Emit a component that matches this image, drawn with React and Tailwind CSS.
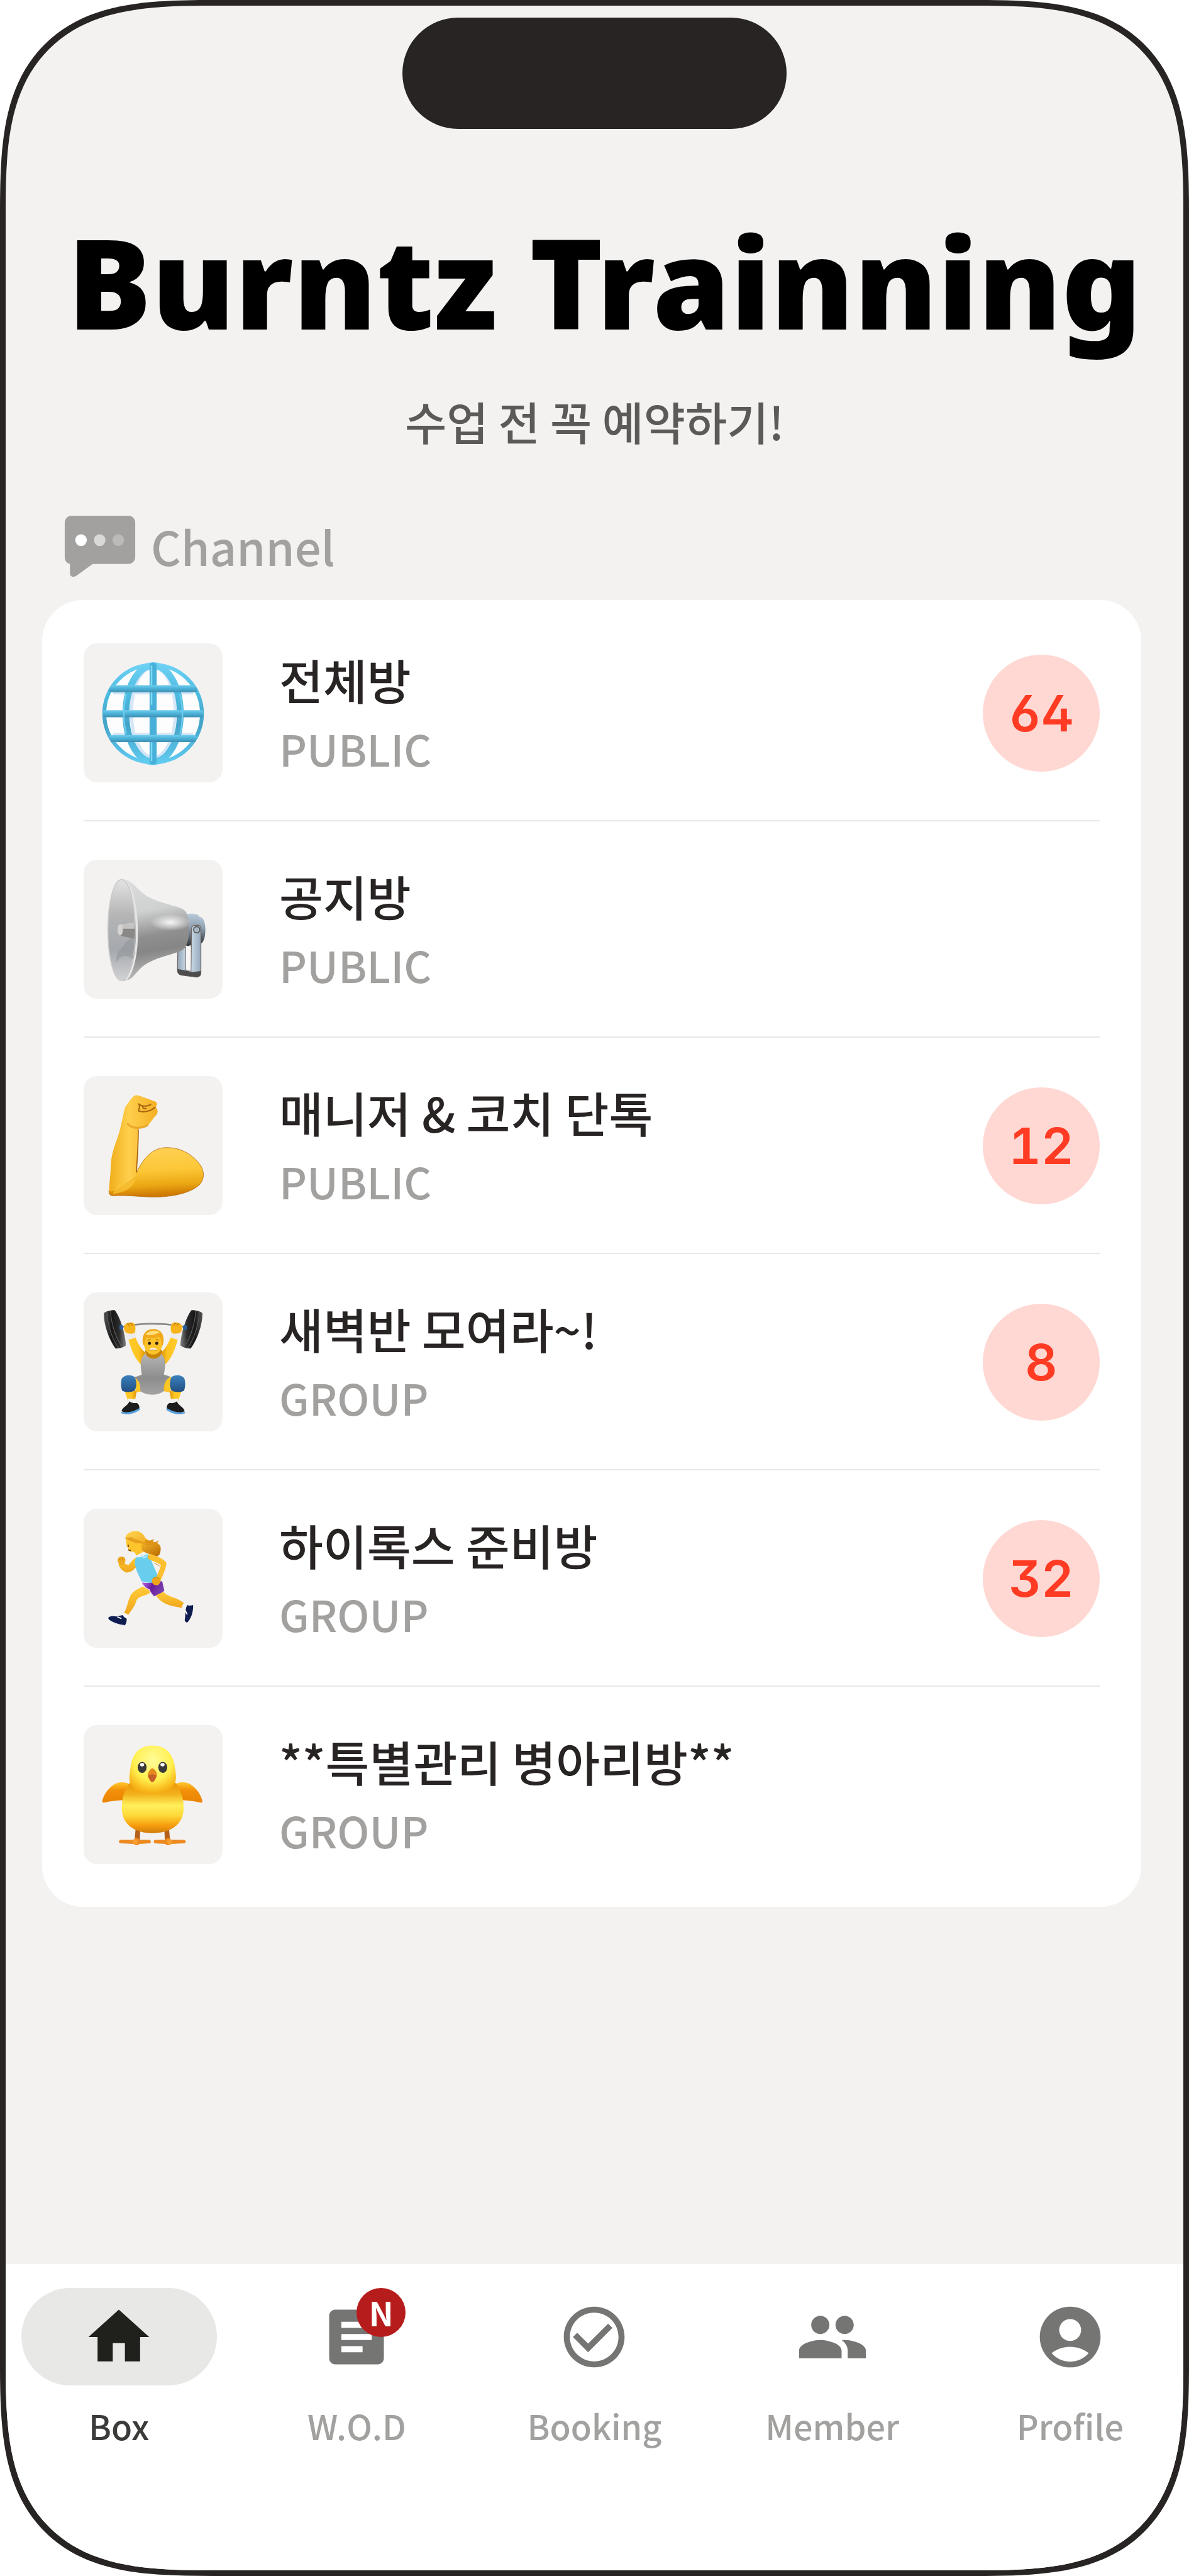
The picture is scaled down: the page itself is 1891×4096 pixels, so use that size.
import {
  MdArticle,
  MdCheckCircleOutline,
  MdGroup,
  MdHome,
} from "react-icons/md";

function GlobeEmoji() {
  return (
    <svg viewBox="187 181 532 532" className="w-full" aria-hidden="true">
      <defs>
        <linearGradient id="globeLine" gradientUnits="userSpaceOnUse" x1="0" y1="258" x2="0" y2="645">
          <stop offset="0" stopColor="#6fd2f5" />
          <stop offset="0.3" stopColor="#4dbbe0" />
          <stop offset="0.6" stopColor="#43a3c8" />
          <stop offset="1" stopColor="#62cdf2" />
        </linearGradient>
        <linearGradient id="globeBar" x1="0" y1="0" x2="0" y2="1">
          <stop offset="0" stopColor="#6fcdee" />
          <stop offset="0.5" stopColor="#49b0d6" />
          <stop offset="1" stopColor="#3f8fb2" />
        </linearGradient>
        <clipPath id="globeClip">
          <circle cx="453" cy="450" r="194" />
        </clipPath>
      </defs>
      <circle cx="453" cy="450" r="188" fill="#fdfdfd" />
      <g fill="none" stroke="#d3e6f7" strokeWidth="12">
        <ellipse cx="454" cy="445" rx="84" ry="172" />
        <path d="M300 372h306M300 528h306" strokeWidth="9" />
      </g>
      <g fill="none" stroke="url(#globeLine)">
        <circle cx="453" cy="450" r="187" strokeWidth="15" />
        <ellipse cx="453" cy="450" rx="104" ry="184" strokeWidth="26" />
      </g>
      <path
        d="M453 268v364"
        stroke="#48b0d8"
        strokeWidth="27"
        strokeLinecap="round"
      />
      <path d="M447 266v150M447 560v72" stroke="#7bd9fa" strokeWidth="6" />
      <g fill="url(#globeBar)" clipPath="url(#globeClip)">
        <rect x="282" y="341" width="342" height="27" rx="13" />
        <rect x="258" y="437" width="390" height="27" rx="13" />
        <rect x="282" y="532" width="342" height="27" rx="13" />
      </g>
      <path
        d="M350 375c-12 50-12 105 0 152M556 375c12 50 12 105 0 152"
        fill="none"
        stroke="#6acdf0"
        strokeWidth="6"
      />
    </svg>
  );
}

function MegaphoneEmoji() {
  return (
    <svg viewBox="187 1010 532 532" className="w-full" aria-hidden="true">
      <defs>
        <linearGradient id="hornBody" x1="0" y1="0" x2="0.12" y2="1">
          <stop offset="0" stopColor="#dcdddd" />
          <stop offset="0.35" stopColor="#cfd0d0" />
          <stop offset="0.6" stopColor="#8f8f8f" />
          <stop offset="0.75" stopColor="#868686" />
          <stop offset="1" stopColor="#bdbdbd" />
        </linearGradient>
        <linearGradient id="hornInner" x1="0" y1="0" x2="0" y2="1">
          <stop offset="0" stopColor="#e3e3e3" />
          <stop offset="0.35" stopColor="#b5b5b5" />
          <stop offset="0.7" stopColor="#a5a8ad" />
          <stop offset="1" stopColor="#d2d3d4" />
        </linearGradient>
        <linearGradient id="hornSteel" x1="0" y1="0" x2="1" y2="0">
          <stop offset="0" stopColor="#8fa3b5" />
          <stop offset="0.45" stopColor="#d8e6f1" />
          <stop offset="1" stopColor="#94a9bb" />
        </linearGradient>
        <linearGradient id="hornCap" x1="0" y1="0" x2="0" y2="1">
          <stop offset="0" stopColor="#b9cadb" />
          <stop offset="0.45" stopColor="#8a9bab" />
          <stop offset="1" stopColor="#2d3034" />
        </linearGradient>
        <radialGradient id="hornShine">
          <stop offset="0" stopColor="#fff" stopOpacity="0.9" />
          <stop offset="1" stopColor="#fff" stopOpacity="0" />
        </radialGradient>
      </defs>
      <path d="M620 1228c24-6 33 18 33 50s-8 54-24 56z" fill="url(#hornCap)" />
      <path d="M575 1220c20-6 45-4 53 4 12 30 10 86-4 114-12 6-32 6-46 0z" fill="url(#hornCap)" />
      <path
        d="M548 1345h30v85l20 6 2-161c0-9 5-14 14-14h10c8 0 12 4 12 12v170c0 11-7 16-17 16l-56-7c-12-2-17-8-17-20z"
        fill="url(#hornSteel)"
        stroke="#6f6561"
        strokeWidth="3"
      />
      <path d="M546 1428l34 6 24 6 31-4v8c0 10-6 15-16 15l-56-7c-12-2-17-8-17-24z" fill="#4e4d4d" />
      <path d="M579 1346l18-10v100l-18-6z" fill="#f8f7f6" />
      <circle cx="620" cy="1278" r="12" fill="#a8b8c6" stroke="#555" strokeWidth="4" />
      <path
        d="M335 1084c45 6 55 42 96 66 45 26 98 32 134 48 24 11 26 52 25 88-1 40-12 67-35 75-40 16-98 24-140 56-32 24-36 57-80 57z"
        fill="url(#hornBody)"
      />
      <ellipse cx="520" cy="1250" rx="80" ry="32" fill="url(#hornShine)" />
      <path
        d="M340 1086c60 40 72 320 8 384"
        fill="none"
        stroke="#e6e6e6"
        strokeWidth="8"
      />
      <ellipse cx="332" cy="1279" rx="52" ry="193" fill="url(#hornInner)" stroke="#c9c9c9" strokeWidth="4" />
      <path d="M383 1300c0 40-4 70-10 92-18-24-46-16-60 10-6-40 24-50 34-76z" fill="#8e9196" opacity="0.5" />
      <path d="M330 1256l52-6c3 20 3 40 0 62l-52-10c-16-8-16-40 0-46z" fill="#8b8886" />
      <path d="M330 1256l52-6v24h-60c0-10 2-16 8-18z" fill="#c6c4c2" />
      <ellipse cx="327" cy="1278" rx="10" ry="22" fill="#d5d4d2" />
    </svg>
  );
}

function BicepsEmoji() {
  return (
    <svg viewBox="187 181 532 532" className="w-full" aria-hidden="true">
      <defs>
        <linearGradient id="armUpper" x1="0" y1="0" x2="0.1" y2="1">
          <stop offset="0" stopColor="#ffd257" />
          <stop offset="0.5" stopColor="#fcc737" />
          <stop offset="0.8" stopColor="#eba714" />
          <stop offset="1" stopColor="#cf7a04" />
        </linearGradient>
        <linearGradient id="armFore" x1="0" y1="0" x2="1" y2="0">
          <stop offset="0" stopColor="#f0ad1b" />
          <stop offset="0.4" stopColor="#ffcf4c" />
          <stop offset="1" stopColor="#f3b024" />
        </linearGradient>
      </defs>
      <path
        d="M389 552c20-45 55-95 110-97 62-3 110 30 137 70 16 28 12 58-12 78-42 32-115 42-176 41-60-2-95-8-150-5-10 0-15-8-14-20z"
        fill="url(#armUpper)"
        stroke="#b96a08"
        strokeWidth="2"
      />
      <path
        d="M345 303c8-15 22-35 33-44 6-6 14-5 22-3l60 22c10 4 9 14 3 22 10 10 9 22 1 32-8 6-16 22-30 36-12 10-26 14-38 14 1 55-4 120-7 170-2 20-20 28-36 36-25 12-50 40-66 34-6-6 3-50 4-100 2-50 22-90 32-125 12-45 14-65 22-94z"
        fill="url(#armFore)"
      />
      <path
        d="M396 384c1 50-4 120-7 166"
        fill="none"
        stroke="#a85f0a"
        strokeWidth="4"
      />
      <path
        d="M298 632c30-5 70-8 92-60-30 20-50 18-72 24z"
        fill="#fbc63a"
        opacity="0.7"
      />
      <path
        d="M398 288c12 10 30 10 46 2M398 288c8 12-2 20 0 27 20 5 46 2 62-14M412 296c2 10 8 12 14 8"
        fill="none"
        stroke="#a9640d"
        strokeWidth="5"
        strokeLinecap="round"
      />
      <path
        d="M356 364c14 18 50 20 76 6"
        fill="none"
        stroke="#d98c0e"
        strokeWidth="8"
        strokeLinecap="round"
        opacity="0.5"
      />
    </svg>
  );
}

function LifterEmoji() {
  return (
    <svg viewBox="187 1010 532 532" className="w-full" aria-hidden="true">
      <defs>
        <linearGradient id="plateLeft" x1="0" y1="0" x2="1" y2="0">
          <stop offset="0" stopColor="#555" />
          <stop offset="0.35" stopColor="#161616" />
          <stop offset="0.7" stopColor="#2c2c2c" />
          <stop offset="1" stopColor="#858585" />
        </linearGradient>
        <linearGradient id="lifterSkin" x1="0" y1="0" x2="1" y2="0">
          <stop offset="0" stopColor="#ffca28" />
          <stop offset="0.6" stopColor="#fdc524" />
          <stop offset="1" stopColor="#dd9206" />
        </linearGradient>
        <linearGradient id="lifterSuit" x1="0" y1="0" x2="0" y2="1">
          <stop offset="0" stopColor="#b5b5b5" />
          <stop offset="0.6" stopColor="#8d8d8d" />
          <stop offset="1" stopColor="#a3a3a3" />
        </linearGradient>
        <linearGradient id="lifterPad" x1="0" y1="0" x2="0" y2="1">
          <stop offset="0" stopColor="#3b80bd" />
          <stop offset="1" stopColor="#1f4f82" />
        </linearGradient>
        <g id="lifterSide">
          <path d="M264 1090c8-8 25-12 42-12 20 25 40 85 43 135-10 8-24 12-40 12-25-35-45-90-45-135z" fill="url(#plateLeft)" />
          <path d="M276 1084c2 50 20 105 46 140M290 1080c2 50 20 105 46 140" fill="none" stroke="#5a5a5a" strokeWidth="3" />
          <rect x="324" y="1135" width="14" height="18" rx="4" fill="#2a5c9c" />
          <path d="M358 1188l26-10c10 26 22 50 40 62l-12 50c-26-20-42-56-54-102z" fill="url(#lifterSkin)" />
          <path d="M351 1166l32-3 4 20-30 9c-6-8-8-16-6-26z" fill="#ececf0" />
          <path d="M343 1136c6-10 30-16 38-6 6 10 6 28 0 36-10 4-24 2-32-2-8-8-10-18-6-28z" fill="#f7b41c" />
          <path d="M352 1132c4-6 12 0 8 8M364 1130c5-4 12 2 8 8" fill="none" stroke="#c47c08" strokeWidth="3" />
          <path d="M384 1334c24-4 40 20 36 52l-34 8z" fill="url(#lifterSkin)" />
          <path d="M344 1386h46l-6 36-28 2z" fill="url(#lifterSkin)" />
          <path d="M355 1416l32 2v18l-26-4z" fill="#f2f2f2" />
          <path d="M333 1340c8-14 36-18 50-5 8 16 8 38-2 52-14 6-34 6-46 0-6-14-6-34-2-47z" fill="url(#lifterPad)" />
          <path d="M332 1465c4-18 24-20 30-38 8 6 18 8 28 6 8 4 12 12 10 24-20 16-46 18-68 8z" fill="#1d1d1d" />
          <path d="M331 1467c24 6 46 0 70-14l2 6c-20 16-48 22-72 14z" fill="#5aa0dd" />
        </g>
      </defs>
      <path d="M335 1142c70-16 160-16 235 0" fill="none" stroke="#8b8b8b" strokeWidth="7" />
      <use href="#lifterSide" />
      <use href="#lifterSide" transform="matrix(-1 0 0 1 906 0)" />
      <path
        d="M418 1250c6-8 10-10 14-4 12 14 32 14 44 0 4-6 8-4 12 4 16 16 12 46 6 74 20 6 32 12 30 8-22 8-32 28-30 56-24 18-66 18-90 0 2-28-8-48-30-56 10 4 20-2 36-8-6-28-8-58 8-74z"
        fill="url(#lifterSuit)"
      />
      <path d="M423 1232c-2 40 62 44 64 0l-10-6h-46z" fill="#c98505" />
      <path d="M416 1196c-2-30 16-44 38-44s40 14 37 46c-2 30-16 50-38 50s-36-22-37-52z" fill="#fdc42a" />
      <path d="M414 1210c-6-36 8-60 40-60 30 0 44 24 38 54-2 10-4 12-6 8-2-14-4-26-10-32-16 6-36 8-46 2-8 6-8 18-10 30z" fill="#f0a91b" />
      <path d="M424 1172c8-16 36-20 54-10-16 10-36 14-54 10z" fill="#ffdf7a" />
      <circle cx="439" cy="1205" r="6" fill="#2f2013" />
      <circle cx="467" cy="1205" r="6" fill="#2f2013" />
      <path d="M431 1193l12-2M463 1191l12 2" stroke="#a56a10" strokeWidth="3" />
      <path d="M441 1229c8-4 16-4 24 0" stroke="#fff" strokeWidth="6" fill="none" />
      <path d="M441 1232c8-3 16-3 24 0" stroke="#8b5a1c" strokeWidth="2" fill="none" />
    </svg>
  );
}

function RunnerEmoji() {
  return (
    <svg
      viewBox="187 163 532 477"
      preserveAspectRatio="none"
      className="h-full w-full"
      aria-hidden="true"
    >
      <defs>
        <linearGradient id="runnerHair" x1="0" y1="0" x2="0.8" y2="1">
          <stop offset="0" stopColor="#ffd556" />
          <stop offset="0.5" stopColor="#f5b52a" />
          <stop offset="1" stopColor="#bf7405" />
        </linearGradient>
        <linearGradient id="runnerSkin" x1="0" y1="0" x2="0" y2="1">
          <stop offset="0" stopColor="#ffcb37" />
          <stop offset="1" stopColor="#f0a51b" />
        </linearGradient>
        <linearGradient id="runnerShorts" x1="0" y1="0" x2="1" y2="0.4">
          <stop offset="0" stopColor="#c06cf5" />
          <stop offset="0.5" stopColor="#6b1d9c" />
          <stop offset="1" stopColor="#7b3fae" />
        </linearGradient>
      </defs>
      <path d="M462 458l30-10c20 20 55 18 80 40l-8 16c-30-8-75-6-102-46z" fill="url(#runnerSkin)" />
      <path d="M412 430l34 14c-6 18-42 14-56 32-6 22-20 34-34 54l-14-10c14-20 14-46 28-64 12-14 28-18 42-26z" fill="url(#runnerSkin)" />
      <path d="M568 488l16 6-8 18-14-8zM344 520l16 8-8 14-14-12z" fill="#f6f6f8" />
      <path d="M584 493c6 4 14 2 22 0 2 22-8 48-22 60-6 0-10-4-10-8 4-16 0-36 10-52z" fill="#0e1c50" />
      <path d="M282 536c12-8 26-2 36-4l18-4c4 6 10 10 16 12 0 10-2 18-8 24-22-2-56-14-62-24z" fill="#0e1c50" />
      <path d="M284 546c18 10 40 16 60 18" fill="none" stroke="#e5e8f2" strokeWidth="3" />
      <path d="M316 534l16 6M576 512l8 14" stroke="#fff" strokeWidth="4" />
      <path d="M388 330l6 26c-10 14-26 26-44 26-14-6-24-14-30-28l14-10c8 8 16 10 24 12 10-8 18-20 30-26z" fill="url(#runnerSkin)" />
      <path d="M317 336c4-10 20-12 28-4 4 8 2 18-6 24-12 2-24-8-22-20z" fill="#f0ab22" />
      <path d="M322 336l10 4M334 330l2 8" stroke="#b87412" strokeWidth="2" />
      <path d="M346 266c4-30 60-40 76-4 14 18 60 10 60 38 0 16-6 28-18 26-26-10-56-12-72-34z" fill="url(#runnerHair)" />
      <path d="M422 270c10 4 22 4 34-4-2 10-6 12-10 14 12 0 20-4 30-8-8 14-30 18-54 14z" fill="#dd9213" />
      <path d="M350 268c-2 12 2 24 8 32 0 8 6 12 14 10 10 2 14 6 16 14l26-12c-6-12-6-24-4-32-20 4-40 0-60-12z" fill="#fdc42c" />
      <path d="M345 264c20 12 60 24 100 18-30-4-60-14-76-22z" fill="#e6a01d" />
      <path d="M358 286v8M358 304l10 3" stroke="#6b3b0c" strokeWidth="4" />
      <path d="M388 330c10 0 30-2 42-14 20 20 28 62 54 94-22 12-48 8-76 2-4-14-18-30-22-50-6-12-2-22 2-32z" fill="#69cdee" />
      <path d="M408 320c6 16 20 12 22-4" fill="none" stroke="#b3ecfb" strokeWidth="5" />
      <path d="M410 416c26 4 50 0 78-4 2 12 6 22 8 32-12 10-26 12-40 20-8-6-12-14-18-24-10-2-20-10-28-24z" fill="url(#runnerShorts)" />
      <path d="M410 420c8 10 18 18 28 20 4 10 10 18 18 24" fill="none" stroke="#efdcf8" strokeWidth="3" />
      <path
        d="M442 328c20 8 36 10 52 24-4 22-16 40-24 60"
        fill="none"
        stroke="#fbbf30"
        strokeWidth="20"
        strokeLinecap="round"
        strokeLinejoin="round"
      />
      <path d="M448 412c0-12 14-16 26-12 8 6 8 16 0 24-10 4-22 2-26-12z" fill="#f0a51b" />
      <path d="M452 404c4-8 18-8 28 0M458 350c8 3 14 6 20 10" fill="none" stroke="#c4820f" strokeWidth="2" />
    </svg>
  );
}

function ChickEmoji() {
  return (
    <svg
      viewBox="187 907 532 477"
      preserveAspectRatio="none"
      className="h-full w-full"
      aria-hidden="true"
    >
      <defs>
        <radialGradient id="chickHead" cx="0.5" cy="0.3" r="0.75">
          <stop offset="0" stopColor="#fffb98" />
          <stop offset="0.55" stopColor="#fff04f" />
          <stop offset="0.8" stopColor="#fac022" />
          <stop offset="1" stopColor="#f0a00c" />
        </radialGradient>
        <linearGradient id="chickBelly" x1="0" y1="0" x2="0" y2="1">
          <stop offset="0" stopColor="#eb970a" />
          <stop offset="0.22" stopColor="#f3b01a" />
          <stop offset="0.45" stopColor="#fff05a" />
          <stop offset="0.65" stopColor="#fdd83a" />
          <stop offset="0.85" stopColor="#f79c0c" />
          <stop offset="1" stopColor="#cf7d0e" />
        </linearGradient>
        <linearGradient id="chickWing" x1="0" y1="0" x2="0" y2="1">
          <stop offset="0" stopColor="#ffc629" />
          <stop offset="0.4" stopColor="#f29008" />
          <stop offset="1" stopColor="#ea8304" />
        </linearGradient>
        <g id="chickSide">
          <path d="M364 1110c-20-10-50-8-66 4-20 14-36 34-40 56 4 6 14 2 24 0 22-4 42-6 62-5z" fill="url(#chickWing)" />
          <path d="M386 1264h18l-2 38h-20z" fill="#b4601c" />
          <path d="M328 1301l48 0 14-8 12 8 38 0c6 2 6 10 0 12l-40 2c-4 6-16 6-22 0l-50-2c-8-2-8-10 0-12z" fill="#ee8a22" />
          <circle cx="384" cy="1308" r="9" fill="#f79f33" />
        </g>
      </defs>
      <use href="#chickSide" />
      <use href="#chickSide" transform="matrix(-1 0 0 1 900 0)" />
      <path
        d="M364 1105c-20 22-31 52-31 86 0 58 50 87 118 87s119-29 119-87c0-34-12-64-31-86z"
        fill="url(#chickBelly)"
      />
      <path
        d="M450 977c56 0 80 34 86 72 4 22 8 40 0 58-20 28-50 38-86 38s-68-10-84-38c-8-18-2-36 1-58 6-38 28-72 83-72z"
        fill="url(#chickHead)"
      />
      <ellipse cx="411" cy="1052" rx="17" ry="19" fill="#3a3a3a" />
      <ellipse cx="490" cy="1052" rx="17" ry="19" fill="#3a3a3a" />
      <ellipse cx="411" cy="1043" rx="8" ry="6" fill="#fff" />
      <ellipse cx="489" cy="1043" rx="8" ry="6" fill="#fff" />
      <path d="M450 1055c10 4 18 14 18 24-4 12-12 24-18 24s-14-12-18-24c2-10 8-20 18-24z" fill="#e58a1d" />
      <path d="M434 1082c6-8 26-8 32 0-4 12-10 20-16 20s-12-8-16-20z" fill="#c4602a" />
    </svg>
  );
}

function ChatIcon() {
  return (
    <svg viewBox="0 0 123 106" className="w-[114px]" aria-hidden="true">
      <path
        d="M13 1h97a12 12 0 0 1 12 12v59a12 12 0 0 1-12 12H49L21 104c-6 4-11 1-11-4V84C4 82 1 78 1 72V13A12 12 0 0 1 13 1z"
        fill="#a2a19f"
      />
      <circle cx="29" cy="43" r="10" fill="#ffffff" />
      <circle cx="61" cy="43" r="10" fill="#d9d9d8" />
      <circle cx="93" cy="43" r="10" fill="#bbbab9" />
    </svg>
  );
}

function ProfileIcon({ className }) {
  return (
    <svg viewBox="0 0 24 24" fill="currentColor" className={className} aria-hidden="true">
      <path
        fillRule="evenodd"
        d="M12 2a10 10 0 1 0 0 20 10 10 0 0 0 0-20zm0 4.1a3.6 3.6 0 1 1 0 7.2 3.6 3.6 0 0 1 0-7.2zM5.9 17.3c1.8-1.4 3.9-2.1 6.1-2.1s4.300.7 6.1 2.1c-1.500 1.800-3.600 2.800-6.100 2.800s-4.600-1-6.100-2.800z"
      />
    </svg>
  );
}

const channels = [
  { name: "전체방", type: "PUBLIC", unread: 64, Emoji: GlobeEmoji },
  { name: "공지방", type: "PUBLIC", unread: 0, Emoji: MegaphoneEmoji },
  { name: "매니저 & 코치 단톡", type: "PUBLIC", unread: 12, Emoji: BicepsEmoji },
  { name: "새벽반 모여라~!", type: "GROUP", unread: 8, Emoji: LifterEmoji },
  { name: "하이록스 준비방", type: "GROUP", unread: 32, Emoji: RunnerEmoji },
  { name: "**특별관리 병아리방**", type: "GROUP", unread: 0, Emoji: ChickEmoji },
];

const tabs = [
  { label: "Box", Icon: MdHome, active: true },
  { label: "W.O.D", Icon: MdArticle, badge: "N" },
  { label: "Booking", Icon: MdCheckCircleOutline },
  { label: "Member", Icon: MdGroup },
  { label: "Profile", Icon: ProfileIcon },
];

function ChannelRow({ channel }) {
  const { name, type, unread, Emoji } = channel;

  return (
    <li className="border-b-2 border-[#e8e8e7] pt-[61px] pb-[60px] first:pt-0 last:border-b-0 last:pb-0">
      <a href="#" className="flex items-center">
        <div className="h-[221px] w-[221px] shrink-0 overflow-hidden rounded-[21px] bg-[#f3f2f1]">
          <Emoji />
        </div>
        <div className="ml-[90px] flex-1">
          <p className="text-[76px] leading-[112px] font-medium text-[#282423]">
            {name}
          </p>
          <p className="text-[68px] leading-[108px] font-medium text-[#a2a19f]">
            {type}
          </p>
        </div>
        {unread > 0 && (
          <span className="flex h-[186px] w-[186px] shrink-0 items-center justify-center rounded-full bg-[#ffd8d3] font-['Inter'] text-[80px] leading-none font-semibold text-[#ff3b24] [font-feature-settings:'ss01','cv02','cv03','cv09','tnum']">
            {unread}
          </span>
        )}
      </a>
    </li>
  );
}

function TabItem({ tab }) {
  const { label, Icon, active, badge } = tab;

  return (
    <a href="#" className="flex flex-col items-center">
      <div
        className={
          active
            ? "relative flex h-[155px] w-[311px] items-center justify-center rounded-full bg-[#e8e8e6] text-[#20201c]"
            : "relative flex h-[155px] w-[311px] items-center justify-center text-[#757573]"
        }
      >
        <Icon className="h-[116px] w-[116px]" />
        {badge && (
          <span className="absolute top-0 left-1/2 flex h-[78px] w-[78px] items-center justify-center rounded-full bg-[#b71c1c] text-[52px] leading-none font-bold text-white">
            {badge}
          </span>
        )}
      </div>
      <span
        className={
          active
            ? "mt-[20px] text-[54px] leading-[88px] font-medium text-[#3b3b39]"
            : "mt-[20px] text-[54px] leading-[88px] font-medium text-[#a2a19f]"
        }
      >
        {label}
      </span>
    </a>
  );
}

function App() {
  return (
    <div className="min-h-screen bg-white font-['Noto_Sans_CJK_KR','Noto_Sans',sans-serif]">
      <div className="flex min-h-screen flex-col overflow-hidden rounded-[338px] border-[9px] border-[#282423] bg-[#f3f2f0] [corner-shape:superellipse(1.56)]">
        <div className="mx-auto mt-[19px] h-[177px] w-[611px] rounded-full bg-[#282423]" />

        <header className="mt-[102px] text-center">
          <h1 className="pl-[32px] font-['Noto_Sans','Open_Sans',sans-serif] text-[198px] leading-[280px] font-black whitespace-nowrap text-black">
            Burntz Trainning
          </h1>
          <p className="mt-[26px] text-[72px] leading-[112px] font-medium text-[#5b5a58]">
            수업 전 꼭 예약하기!
          </p>
        </header>

        <main className="mt-[87px] pr-[67px] pl-[58px]">
          <h2 className="flex items-center gap-[24px] pl-[35px] text-[74px] leading-[112px] font-medium text-[#a2a19f]">
            <ChatIcon />
            Channel
          </h2>
          <ul className="mt-[30px] rounded-[65px] bg-white px-[66px] pt-[69px] pb-[68px]">
            {channels.map((channel) => (
              <ChannelRow key={channel.name} channel={channel} />
            ))}
          </ul>
        </main>

        <nav className="-mx-[9px] mt-auto grid grid-cols-5 bg-white pt-[38px] pb-[186px]">
          {tabs.map((tab) => (
            <TabItem key={tab.label} tab={tab} />
          ))}
        </nav>
      </div>
    </div>
  );
}

export default App;
